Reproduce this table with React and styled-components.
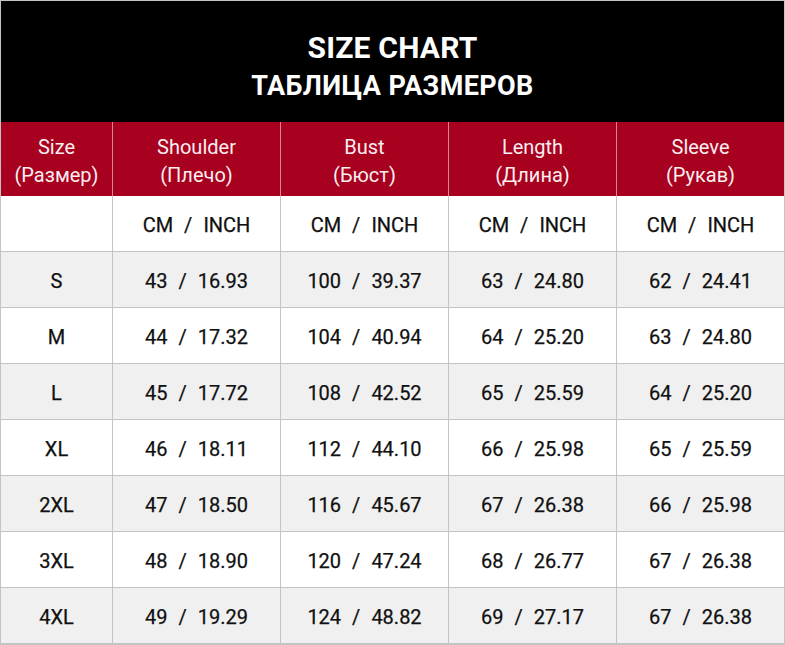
import React from "react";
import styled, { createGlobalStyle } from "styled-components";

const GlobalStyle = createGlobalStyle`
  html, body {
    margin: 0;
    padding: 0;
    background: #ffffff;
  }
  body {
    font-family: Roboto, "Noto Sans", "DejaVu Sans", sans-serif;
  }
`;

const LINE = "#c4c4c4";

const Chart = styled.div`
  width: 785px;
  height: 645px;
  box-sizing: border-box;
  border: 1px solid ${LINE};
  display: flex;
  flex-direction: column;
  overflow: hidden;
`;

const Banner = styled.div`
  height: 121px;
  background: #000000;
  color: #ffffff;
  display: flex;
  flex-direction: column;
  align-items: center;
  justify-content: center;
  padding-top: 11px;
  box-sizing: border-box;
`;

const Title = styled.h1`
  margin: 0;
  font-size: ${p => p.size}px;
  line-height: 38px;
  font-weight: 700;
  letter-spacing: ${p => p.spacing}px;
`;

const Grid = styled.div`
  display: grid;
  grid-template-columns: 112px 168px 168px 168px 1fr;
  grid-auto-rows: 56px;
  grid-template-rows: 74px;
`;

const Cell = styled.div`
  display: flex;
  align-items: center;
  justify-content: center;
  box-sizing: border-box;
  border-right: 1px solid ${LINE};
  border-bottom: 1px solid ${LINE};
  background: ${p => (p.shade ? "#f0f0f0" : "#ffffff")};
  color: #111111;
  font-size: 20px;
  font-weight: 400;
  padding-top: 2px;
  -webkit-text-stroke: 0.25px #111111;
  &:nth-child(5n) {
    border-right: none;
  }
`;

const HeadCell = styled(Cell)`
  flex-direction: column;
  background: #a8001f;
  color: #fbeef0;
  border-right-color: #d98592;
  border-bottom: none;
  font-size: 20px;
  line-height: 28px;
  padding-top: 4px;
  -webkit-text-stroke: 0;
`;

const Pair = styled.span`
  display: inline-flex;
  gap: 11px;
  align-items: baseline;
`;

const columns = [
  ["Size", "(Размер)"],
  ["Shoulder", "(Плечо)"],
  ["Bust", "(Бюст)"],
  ["Length", "(Длина)"],
  ["Sleeve", "(Рукав)"],
];

const rows = [
  ["S", "43", "16.93", "100", "39.37", "63", "24.80", "62", "24.41"],
  ["M", "44", "17.32", "104", "40.94", "64", "25.20", "63", "24.80"],
  ["L", "45", "17.72", "108", "42.52", "65", "25.59", "64", "25.20"],
  ["XL", "46", "18.11", "112", "44.10", "66", "25.98", "65", "25.59"],
  ["2XL", "47", "18.50", "116", "45.67", "67", "26.38", "66", "25.98"],
  ["3XL", "48", "18.90", "120", "47.24", "68", "26.77", "67", "26.38"],
  ["4XL", "49", "19.29", "124", "48.82", "69", "27.17", "67", "26.38"],
];

function Value({ a, b }) {
  return (
    <Pair>
      <span>{a}</span>
      <span>/</span>
      <span>{b}</span>
    </Pair>
  );
}

export default function App() {
  return (
    <>
      <GlobalStyle />
      <Chart>
        <Banner>
          <Title size={30} spacing={0.2}>SIZE CHART</Title>
          <Title size={27} spacing={0.4}>ТАБЛИЦА РАЗМЕРОВ</Title>
        </Banner>
        <Grid>
          {columns.map(([en, ru]) => (
            <HeadCell key={en}>
              <span>{en}</span>
              <span>{ru}</span>
            </HeadCell>
          ))}
          <Cell />
          {[1, 2, 3, 4].map(i => (
            <Cell key={`unit-${i}`}>
              <Value a="CM" b="INCH" />
            </Cell>
          ))}
          {rows.map((row, r) => {
            const shade = r % 2 === 0;
            return (
              <React.Fragment key={row[0]}>
                <Cell shade={shade}>{row[0]}</Cell>
                {[1, 3, 5, 7].map(i => (
                  <Cell key={i} shade={shade}>
                    <Value a={row[i]} b={row[i + 1]} />
                  </Cell>
                ))}
              </React.Fragment>
            );
          })}
        </Grid>
      </Chart>
    </>
  );
}
